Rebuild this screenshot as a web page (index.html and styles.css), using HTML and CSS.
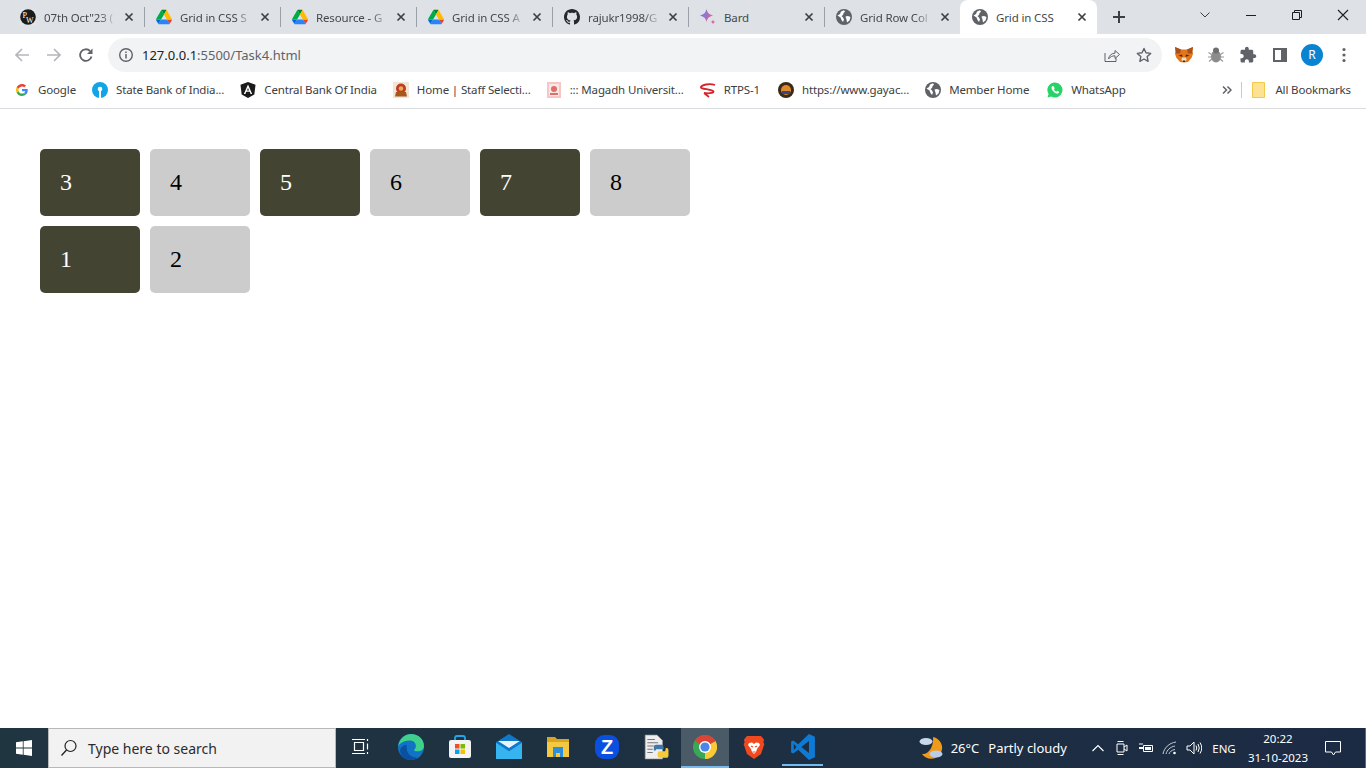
FILE: index.html
```html
<!DOCTYPE html>
<html lang="en">
<head>
    <meta charset="UTF-8">
    <title>Grid in CSS</title>
    <link rel="stylesheet" href="styles.css">
</head>
<body>

<svg class="sprite">
    <symbol id="drive" viewBox="0 0 87.3 78">
        <path d="m6.6 66.85 3.85 6.65c.8 1.4 1.95 2.5 3.3 3.3l13.75-23.8h-27.5c0 1.55.4 3.1 1.2 4.5z" fill="#0066da"/>
        <path d="m43.65 25-13.75-23.8c-1.35.8-2.5 1.9-3.3 3.3l-25.4 44a9.06 9.06 0 0 0 -1.2 4.5h27.5z" fill="#00ac47"/>
        <path d="m73.55 76.8c1.35-.8 2.5-1.9 3.3-3.3l1.6-2.75 7.65-13.25c.8-1.4 1.2-2.95 1.2-4.5h-27.502l5.852 11.5z" fill="#ea4335"/>
        <path d="m43.65 25 13.75-23.8c-1.35-.8-2.9-1.2-4.5-1.2h-18.5c-1.6 0-3.15.45-4.5 1.2z" fill="#00832d"/>
        <path d="m59.8 53h-32.3l-13.75 23.8c1.35.8 2.9 1.2 4.5 1.2h50.8c1.6 0 3.15-.45 4.5-1.2z" fill="#2684fc"/>
        <path d="m73.4 26.5-12.7-22c-.8-1.4-1.95-2.5-3.3-3.3l-13.75 23.8 16.15 28h27.45c0-1.55-.4-3.1-1.2-4.5z" fill="#ffba00"/>
    </symbol>
    <symbol id="globe" viewBox="0 0 16 16">
        <circle cx="8" cy="8" r="8" fill="#5f6368"/>
        <path d="M1.5 6.5 4 5l1-2.5L8 1.2l1 1.3-1.5 1.8-.5 1.7L5.5 7l1.5 1.5 1 2-1 2.5-1.5-2-1-2.5z" fill="#fff"/>
        <path d="M9.5 7.5 12 7l2.5 1-1 3.5-2.5 2-.5-3z" fill="#fff"/>
    </symbol>
    <symbol id="close" viewBox="0 0 16 16">
        <path d="M4.500 4.500l7 7M11.500 4.500l-7 7" stroke="#3c4043" stroke-width="1.700" fill="none"/>
    </symbol>
</svg>

<!-- Tab strip -->
<div class="tabstrip">
    <div class="tab">
        <svg class="favicon" viewBox="0 0 16 16"><rect width="16" height="16" fill="#e4e5e8"/><circle cx="8" cy="8" r="7.800" fill="#1b1b1b"/><text x="2.500" y="8.500" class="pw-mark">P</text><text x="6" y="14" class="pw-mark">W</text></svg>
        <span class="tab-title">07th Oct"23 (</span>
        <svg class="tab-close"><use href="#close"/></svg>
    </div>
    <div class="tab">
        <svg class="favicon"><use href="#drive"/></svg>
        <span class="tab-title">Grid in CSS S</span>
        <svg class="tab-close"><use href="#close"/></svg>
    </div>
    <div class="tab">
        <svg class="favicon"><use href="#drive"/></svg>
        <span class="tab-title">Resource - G</span>
        <svg class="tab-close"><use href="#close"/></svg>
    </div>
    <div class="tab">
        <svg class="favicon"><use href="#drive"/></svg>
        <span class="tab-title">Grid in CSS A</span>
        <svg class="tab-close"><use href="#close"/></svg>
    </div>
    <div class="tab">
        <svg class="favicon" viewBox="0 0 16 16"><path fill="#24292f" d="M8 0C3.58 0 0 3.58 0 8c0 3.54 2.29 6.53 5.47 7.59.4.07.55-.17.55-.38 0-.19-.01-.82-.01-1.49-2.01.37-2.53-.49-2.69-.94-.09-.23-.48-.94-.82-1.13-.28-.15-.68-.52-.01-.53.63-.01 1.08.58 1.23.82.72 1.21 1.87.87 2.33.66.07-.52.28-.87.51-1.07-1.78-.2-3.64-.89-3.64-3.95 0-.87.31-1.59.82-2.15-.08-.2-.36-1.02.08-2.12 0 0 .67-.21 2.2.82.64-.18 1.32-.27 2-.27.68 0 1.36.09 2 .27 1.53-1.04 2.2-.82 2.2-.82.44 1.1.16 1.92.08 2.12.51.56.82 1.27.82 2.15 0 3.07-1.87 3.75-3.65 3.95.29.25.54.73.54 1.48 0 1.07-.01 1.93-.01 2.2 0 .21.15.46.55.38A8.013 8.013 0 0016 8c0-4.42-3.58-8-8-8z"/></svg>
        <span class="tab-title">rajukr1998/G</span>
        <svg class="tab-close"><use href="#close"/></svg>
    </div>
    <div class="tab">
        <svg class="favicon" viewBox="0 0 16 16">
            <defs><linearGradient id="bardStar" x1="0" y1="0" x2="1" y2="0.300"><stop offset="0" stop-color="#4f86ec"/><stop offset=".55" stop-color="#9b72cb"/><stop offset="1" stop-color="#e8618c"/></linearGradient></defs>
            <path d="M6.500 0C7 3.500 9 5.500 13 6.500 9 7.500 7 9.500 6.500 13 6 9.500 4 7.500 0 6.500 4 5.500 6 3.500 6.500 0z" fill="url(#bardStar)"/>
            <path d="M13 10.500c.2 1.400 1 2.200 2.500 2.500-1.500.3-2.300 1.100-2.500 2.500-.2-1.400-1-2.200-2.500-2.500 1.500-.3 2.300-1.100 2.500-2.500z" fill="#d9609a"/>
        </svg>
        <span class="tab-title plain">Bard</span>
        <svg class="tab-close"><use href="#close"/></svg>
    </div>
    <div class="tab">
        <svg class="favicon"><use href="#globe"/></svg>
        <span class="tab-title">Grid Row Col</span>
        <svg class="tab-close"><use href="#close"/></svg>
    </div>
    <div class="tab active">
        <svg class="favicon"><use href="#globe"/></svg>
        <span class="tab-title plain">Grid in CSS</span>
        <svg class="tab-close"><use href="#close"/></svg>
    </div>
    <div class="newtab">
        <svg class="ico-16" viewBox="0 0 16 16"><path d="M8 2v12M2 8h12" stroke="#3c4043" stroke-width="2"/></svg>
    </div>
    <div class="window-controls">
        <div class="win-btn"><svg class="ico-16" viewBox="0 0 16 16"><path d="M3.500 5.500 8 10l4.500-4.500" stroke="#3c4043" fill="none"/></svg></div>
        <div class="win-btn"><svg class="ico-16" viewBox="0 0 16 16"><path d="M3 8.500h10" stroke="#1f1f1f"/></svg></div>
        <div class="win-btn"><svg class="ico-16" viewBox="0 0 16 16"><path d="M3.500 5.500h7v7h-7zM5.500 5.500v-2h7v7h-2" stroke="#1f1f1f" fill="none"/></svg></div>
        <div class="win-btn"><svg class="ico-16" viewBox="0 0 16 16"><path d="M3 3l10 10M13 3 3 13" stroke="#1f1f1f" stroke-width="1.100"/></svg></div>
    </div>
</div>

<!-- Address bar -->
<div class="toolbar">
    <div class="tool-btn first"><svg class="ico-16" viewBox="0 0 16 16"><path d="M15 8H2M8 2 2 8l6 6" stroke="#b4b6b9" stroke-width="1.700" fill="none"/></svg></div>
    <div class="tool-btn"><svg class="ico-16" viewBox="0 0 16 16"><path d="M1 8h13M8 2l6 6-6 6" stroke="#b4b6b9" stroke-width="1.700" fill="none"/></svg></div>
    <div class="tool-btn"><svg class="ico-16" viewBox="0 0 16 16"><path d="M13.500 9.500A5.800 5.800 0 1 1 12 4" stroke="#5f6368" stroke-width="1.800" fill="none"/><path d="M14.500 1.500v5.500H9z" fill="#5f6368"/></svg></div>
    <div class="omnibox">
        <svg class="ico-16" viewBox="0 0 16 16"><circle cx="8" cy="8" r="6.300" stroke="#5f6368" stroke-width="1.400" fill="none"/><path d="M8 7v4.500M8 4.500v1.500" stroke="#5f6368" stroke-width="1.500"/></svg>
        <span class="url"><span class="url-host">127.0.0.1</span>:5500/Task4.html</span>
        <span class="omni-actions">
            <svg class="ico-16" viewBox="0 0 16 16"><path d="M1 6v8.500h11V11" stroke="#5f6368" fill="none"/><path d="M4.500 12c.5-3.500 3-5.800 6.500-5.800V3.500l4.500 4-4.500 4V8.800c-2.800 0-4.800 1-6.500 3.200z" stroke="#5f6368" fill="none"/></svg>
            <svg class="ico-16" viewBox="0 0 16 16"><path d="M8 1.500l2 4.300 4.700.6-3.500 3.200.9 4.700L8 12l-4.100 2.300.9-4.700L1.300 6.400 6 5.800z" stroke="#5f6368" stroke-width="1.400" stroke-linejoin="round" fill="none"/></svg>
        </span>
    </div>
    <div class="tool-btn"><svg class="ico-18" viewBox="0 0 18 18"><path d="M0 1l6 2.500h6L18 1l-.8 4.500.8 2-1.200 4L13 16l-4 .5L5 16l-3.800-4.500L0 7.500l.8-2z" fill="#e2761b"/><path d="M0 1l6 2.500-1 4-4.200 0zM18 1l-6 2.500 1 4 4.200 0z" fill="#a8501c"/><path d="M3.500 9.500 7 8.500l.5 2.500zM14.500 9.500 11 8.500l-.5 2.500z" fill="#4a2d14"/><path d="M7 11.500h4l.5 2.500-2.500 2-2.500-2z" fill="#f6d9b8"/><path d="M8 14.500h2v1.500H8z" fill="#2a2a2a"/></svg></div>
    <div class="tool-btn"><svg class="ico-18" viewBox="0 0 18 18"><ellipse cx="9" cy="10.500" rx="5" ry="6" fill="#8c8c8c"/><circle cx="9" cy="4.500" r="3" fill="#6f6f6f"/><path d="M1.500 6.500l3 2M1 11h3M2 15.500l3-2.500M16.500 6.500l-3 2M17 11h-3M16 15.500l-3-2.500" stroke="#9a9a9a" stroke-width="1.200"/></svg></div>
    <div class="tool-btn"><svg class="ico-18" viewBox="0 0 24 24"><path fill="#5f6368" d="M20.500 11H19V7c0-1.100-.9-2-2-2h-4V3.500C13 2.120 11.880 1 10.500 1S8 2.120 8 3.500V5H4c-1.100 0-1.990.9-1.990 2v3.800H3.500c1.490 0 2.700 1.210 2.700 2.700s-1.210 2.700-2.700 2.700H2V20c0 1.100.9 2 2 2h3.800v-1.500c0-1.490 1.210-2.700 2.700-2.700 1.490 0 2.700 1.210 2.700 2.700V22H17c1.100 0 2-.9 2-2v-4h1.500c1.380 0 2.500-1.120 2.500-2.500S21.880 11 20.500 11z"/></svg></div>
    <div class="tool-btn"><div class="panel-ico"></div></div>
    <div class="tool-btn"><div class="avatar">R</div></div>
    <div class="tool-btn"><svg class="ico-16" viewBox="0 0 16 16"><circle cx="8" cy="2.500" r="1.600" fill="#5f6368"/><circle cx="8" cy="8" r="1.600" fill="#5f6368"/><circle cx="8" cy="13.500" r="1.600" fill="#5f6368"/></svg></div>
</div>

<!-- Bookmarks -->
<div class="bookmarks">
    <span class="bm"><svg class="bm-ico small" viewBox="0 0 48 48"><path fill="#EA4335" d="M24 9.500c3.540 0 6.710 1.220 9.210 3.600l6.850-6.850C35.900 2.380 30.470 0 24 0 14.620 0 6.510 5.380 2.560 13.220l7.980 6.190C12.430 13.720 17.740 9.500 24 9.500z"/><path fill="#4285F4" d="M46.980 24.550c0-1.570-.15-3.090-.38-4.550H24v9.020h12.940c-.58 2.960-2.260 5.480-4.780 7.180l7.730 6c4.510-4.180 7.090-10.360 7.090-17.650z"/><path fill="#FBBC05" d="M10.530 28.590c-.48-1.450-.76-2.990-.76-4.590s.27-3.140.76-4.590l-7.980-6.190C.92 16.460 0 20.120 0 24c0 3.880.92 7.540 2.560 10.780l7.970-6.190z"/><path fill="#34A853" d="M24 48c6.480 0 11.930-2.130 15.890-5.810l-7.730-6c-2.150 1.450-4.920 2.300-8.160 2.300-6.260 0-11.570-4.220-13.470-9.910l-7.980 6.190C6.510 42.620 14.620 48 24 48z"/></svg>Google</span>
    <span class="bm"><svg class="bm-ico" viewBox="0 0 16 16"><circle cx="8" cy="8" r="8" fill="#12a5e6"/><circle cx="8" cy="7" r="2.300" fill="#fff"/><path d="M7 8h2v8H7z" fill="#fff"/></svg>State Bank of India...</span>
    <span class="bm"><svg class="bm-ico" viewBox="0 0 16 16"><path d="M8 0l7.500 2.700-1.200 9.800L8 16l-6.300-3.500L.5 2.700z" fill="#1a1a1a"/><path d="M8 2.500 3.800 12h1.600l.9-2.200h3.400l.9 2.200h1.600zM7 8.400 8 6l1 2.400z" fill="#fff" fill-rule="evenodd"/></svg>Central Bank Of India</span>
    <span class="bm"><svg class="bm-ico" viewBox="0 0 16 16"><rect width="16" height="16" fill="#efe6d4"/><circle cx="8" cy="6.500" r="5" fill="#c0392b"/><path d="M3 10h10l1 4.500H2z" fill="#a8571f"/><circle cx="8" cy="6.500" r="2.300" fill="#e8b04a"/></svg>Home | Staff Selecti...</span>
    <span class="bm"><svg class="bm-ico narrow" viewBox="0 0 14 16"><rect width="14" height="16" fill="#f4c6c4"/><rect x="2" y="2" width="10" height="12" fill="#fbe6e4"/><circle cx="7" cy="7" r="3" fill="#d9706c"/><path d="M3 11h8v2H3z" fill="#d9706c"/></svg>::: Magadh Universit...</span>
    <span class="bm wide"><svg class="bm-ico" viewBox="0 0 16 16"><path d="M15 3C9 1 2 3 1 5c-1 2 9 2 12 4 2 1.500-3 3-9 2M4 11l5 4" stroke="#d8232a" stroke-width="1.800" fill="none"/></svg>RTPS-1</span>
    <span class="bm"><svg class="bm-ico" viewBox="0 0 16 16"><circle cx="8" cy="8" r="8" fill="#3a2a18"/><circle cx="8" cy="8" r="5" fill="#e08a2c"/><path d="M4 9h8v3H4z" fill="#2c4a8c"/></svg>https://www.gayac...</span>
    <span class="bm wide"><svg class="bm-ico"><use href="#globe"/></svg>Member Home</span>
    <span class="bm"><svg class="bm-ico" viewBox="0 0 16 16"><path d="M8 .5A7.500 7.500 0 0 0 1.600 12L.5 15.500l3.700-1A7.500 7.500 0 1 0 8 .5z" fill="#25d366"/><path d="M5.500 4c-.8.600-1.200 1.500-.8 2.800.6 2 2.500 4 4.500 4.700 1.300.4 2.300 0 2.900-.9l-.2-1-1.800-.8-.8.900c-1-.4-2-1.400-2.400-2.400l.8-.8-.7-1.900z" fill="#fff"/></svg>WhatsApp</span>
    <span class="bm-more">
        <svg class="ico-10" viewBox="0 0 10 10"><path d="M1 1.500 4.500 5 1 8.500M5.500 1.500 9 5 5.500 8.500" stroke="#5f6368" stroke-width="1.500" fill="none"/></svg>
    </span>
    <span class="bm-sep"></span>
    <span class="bm last"><svg class="bm-ico folder" viewBox="0 0 13 16"><path d="M.5.500h12v15H.5z" fill="#fde293" stroke="#f2c94c"/></svg>All Bookmarks</span>
</div>

<!-- Page -->
<div class="page">
    <div class="grid">
        <div class="box dark">3</div>
        <div class="box">4</div>
        <div class="box dark">5</div>
        <div class="box">6</div>
        <div class="box dark">7</div>
        <div class="box">8</div>
        <div class="box dark">1</div>
        <div class="box">2</div>
    </div>
</div>

<!-- Windows taskbar -->
<div class="taskbar">
    <div class="start">
        <svg class="ico-16" viewBox="0 0 16 16"><path fill="#fff" d="M0 2.300 6.800 1.300V7.600H0zM7.600 1.200 16 0v7.600H7.600zM0 8.400h6.800v6.300L0 13.700zM7.600 8.400H16V16l-8.400-1.200z"/></svg>
    </div>
    <div class="search">
        <svg class="ico-18" viewBox="0 0 18 18"><circle cx="10.500" cy="7" r="5.500" stroke="#222" stroke-width="1.200" fill="none"/><path d="M6.500 11 1.500 16.500" stroke="#222" stroke-width="1.300"/></svg>
        <span>Type here to search</span>
    </div>
    <div class="task-icons">
        <div class="task"><svg class="ico-18 nudge" viewBox="0 0 18 18"><path d="M3.500 4.500h9v8h-9zM1 1.500h13M1 15.500h13M16.500 1v2M16.500 5.500v6M16.500 14v2" stroke="#fff" stroke-width="1.200" fill="none"/></svg></div>
        <div class="task"><svg class="ico-26" viewBox="0 0 24 24"><circle cx="12" cy="12" r="12" fill="#1173c6"/><path d="M0 12C1 4 7 0 12 0c7 0 12 5 12 11 0 3-2.500 5-6 5-2 0-3.500-.5-3-1.500 1-1 1.500-2 1.500-3.500C16.500 8 14 6 11 6 5 6 1 9 0 12z" fill="#3fd08c"/><path d="M8 13c0 5 4 9 10 9-2 1.500-4 2-6 2-6 0-10-4-10-9 0-2 3-5 6-5-.5 1-.000 2 0 3z" fill="#0a4fa0"/></svg></div>
        <div class="task"><svg class="ico-24" viewBox="0 0 24 24"><path d="M7 6V3q0-2 2-2h6q2 0 2 2v3" stroke="#22a5e8" stroke-width="1.800" fill="none"/><rect x="1" y="5" width="22" height="18" rx="2" fill="#f3f3f3"/><rect x="7" y="9" width="4.500" height="4.500" fill="#f25022"/><rect x="12.500" y="9" width="4.500" height="4.500" fill="#7fba00"/><rect x="7" y="14.500" width="4.500" height="4.500" fill="#00a4ef"/><rect x="12.500" y="14.500" width="4.500" height="4.500" fill="#ffb900"/></svg></div>
        <div class="task"><svg class="ico-26" viewBox="0 0 24 24"><path d="M0 7.500 12 0l12 7.500V23H0z" fill="#0f78c8"/><path d="M0 8l12 8 12-8v15H0z" fill="#35b4f0"/><path d="M2 6.500h20L12 13z" fill="#e8f4fb"/></svg></div>
        <div class="task"><svg class="ico-24" viewBox="0 0 24 22"><path d="M1 1h8l2 2h12v18H1z" fill="#d9a420"/><path d="M1 6h22v15H1z" fill="#f5c842"/><path d="M7 11h10v10h-3v-4h-4v4H7z" fill="#2d8fd9"/></svg></div>
        <div class="task"><svg class="ico-24" viewBox="0 0 24 24"><rect width="24" height="24" rx="9" fill="#0b4fe0"/><text x="12" y="19" class="zoom-z">Z</text></svg></div>
        <div class="task"><svg class="ico-26" viewBox="0 0 24 24"><path d="M2 1h11l5 5v17H2z" fill="#eeeeee" stroke="#999" stroke-width=".6"/><path d="M4 5h7M4 8h10M4 11h6M4 14h5M4 17h5" stroke="#777"/><path d="M12 10h5q2 0 2 2v2h-7v1l-2 .5V12q0-2 2-2z" fill="#3d78ab"/><path d="M21 13h1q1.500 0 1.500 2v5q0 2-2 2h-6q-2 0-2-2v-2q0-2 2-2h5z" fill="#f5c93c"/></svg></div>
        <div class="task active"><svg class="ico-24" viewBox="0 0 24 24"><circle cx="12" cy="12" r="12" fill="#3aa757"/><path d="M12 12 22.400 6A12 12 0 0 1 12 24z" fill="#fcc934"/><path d="M12 12 1.600 6A12 12 0 0 1 22.400 6z" fill="#db4437"/><circle cx="12" cy="12" r="6" fill="#fff"/><circle cx="12" cy="12" r="4.600" fill="#4a86e8"/></svg></div>
        <div class="task"><svg class="ico-24" viewBox="0 0 24 24"><path d="M5 1h14l3 3.500-.6 3 1 1.500L19 19l-7 5-7-5L1.600 9l1-1.500L2 4.500z" fill="#f1491f"/><path d="M7 8l3-.5 2 1.500 2-1.500 3 .5 1 2-3 4-1 3-2 2-2-2-1-3-3-4z" fill="#fff"/><path d="M9 11l2 1M15 11l-2 1M10.500 17h3" stroke="#f1491f" stroke-width="1.200"/></svg></div>
        <div class="task marked"><svg class="ico-26" viewBox="0 0 24 24"><path fill="#0e7ad3" fill-rule="evenodd" d="M17.500 0 7.500 9.500 3 6 1 7v10l2 1 4.500-3.500L17.500 24l5.500-2.500v-19zM17.500 6.500v11L10.500 12zM3.500 9 6 12l-2.500 3z"/></svg></div>
    </div>
    <div class="tray">
        <svg class="weather-ico" viewBox="0 0 24 24"><path d="M14 1a11 11 0 1 1-11 17c7 1 12-8 11-17z" fill="#f09a1a"/><ellipse cx="7" cy="5.500" rx="6.500" ry="3.500" fill="#c9d7ea"/><ellipse cx="17" cy="18" rx="6.500" ry="3.500" fill="#b9cdea"/></svg>
        <span class="temp">26°C</span>
        <span class="cond">Partly cloudy</span>
        <div class="tray-ico first"><svg class="ico-14" viewBox="0 0 14 14"><path d="M1.500 10 7 4.500 12.500 10" stroke="#fff" stroke-width="1.200" fill="none"/></svg></div>
        <div class="tray-ico"><svg class="ico-16" viewBox="0 0 16 16"><path d="M3 4h7v8H3zM10 7l3-2v6l-3-2M3.500 1.500h6M3.500 14.500h6" stroke="#fff" fill="none"/></svg></div>
        <div class="tray-ico"><svg class="ico-16" viewBox="0 0 16 16"><path d="M5.500 5.500h9v6h-9z" stroke="#fff" fill="none"/><path d="M7 7h6v3H7zM1 7h4v2H1z" fill="#fff"/><path d="M2 5V3M4 5V3" stroke="#fff"/></svg></div>
        <div class="tray-ico"><svg class="ico-16" viewBox="0 0 16 16"><path d="M1 14C2 8 7 3 14 2M4 14c1-4 4-7 9-8M7 14c.5-2 2.500-4 6-4.500" stroke="#c8ccd2" fill="none"/><circle cx="12.500" cy="13" r="1.300" fill="#fff"/></svg></div>
        <div class="tray-ico"><svg class="ico-16" viewBox="0 0 16 16"><path d="M1 6h3l4-4v12l-4-4H1zM10 5.500q1.500 2.500 0 5M12 4q2.500 4 0 8M14 2.500q3.500 5.500 0 11" stroke="#fff" fill="none"/></svg></div>
        <span class="lang">ENG</span>
        <div class="clock"><span>20:22</span><span>31-10-2023</span></div>
        <div class="notify"><svg class="ico-18" viewBox="0 0 18 18"><path d="M1.500 2.500h15v10.500h-5l-2 3-2-3h-6z" stroke="#fff" fill="none"/></svg></div>
    </div>
</div>

</body>
</html>
```

FILE: styles.css
```css
* {
    box-sizing: border-box;
}
html, body {
    margin: 0;
    height: 100%;
}
body {
    display: flex;
    flex-direction: column;
    height: 768px;
    overflow: hidden;
    font-family: "Noto Sans", "Open Sans", sans-serif;
    background: #fff;
}
svg {
    display: block;
    flex: none;
}
.sprite {
    display: none;
}
.ico-10 { width: 10px; height: 10px; }
.ico-14 { width: 14px; height: 14px; }
.ico-16 { width: 16px; height: 16px; }
.ico-18 { width: 18px; height: 18px; }
.ico-24 { width: 24px; height: 24px; }
.ico-26 { width: 26px; height: 26px; }

/* tab strip */
.tabstrip {
    display: flex;
    height: 34px;
    padding-left: 8px;
    background: #dee1e6;
}
.tab {
    position: relative;
    display: flex;
    align-items: center;
    width: 136px;
    padding: 0 7px 0 12px;
    font-size: 11.5px;
    letter-spacing: -0.14px;
    color: #45494e;
}
.tab::before {
    content: "";
    position: absolute;
    left: 0;
    top: 7px;
    height: 20px;
    width: 1px;
    background: #9aa0a6;
}
.tab:first-child::before,
.tab.active::before {
    display: none;
}
.tab.active {
    width: 137px;
    background: #fff;
    border-radius: 8px 8px 0 0;
}
.favicon {
    width: 16px;
    height: 16px;
    margin-right: 8px;
}
.pw-mark {
    font-family: "Liberation Serif", serif;
    font-size: 8px;
    fill: #fff;
}
.tab-title {
    flex: 1;
    min-width: 0;
    overflow: hidden;
    white-space: nowrap;
    -webkit-mask-image: linear-gradient(to right, #000 72%, transparent 94%);
    mask-image: linear-gradient(to right, #000 72%, transparent 94%);
}
.tab-title.plain {
    -webkit-mask-image: none;
    mask-image: none;
}
.tab-close {
    width: 16px;
    height: 16px;
}
.newtab {
    display: flex;
    align-items: center;
    justify-content: center;
    width: 28px;
    margin-left: 8px;
}
.window-controls {
    display: flex;
    margin-left: auto;
}
.win-btn {
    display: flex;
    align-items: center;
    justify-content: center;
    width: 46px;
    height: 29px;
}

/* address bar */
.toolbar {
    display: flex;
    align-items: center;
    height: 38px;
    padding-top: 4px;
    background: #fff;
}
.tool-btn {
    display: flex;
    align-items: center;
    justify-content: center;
    width: 32px;
    height: 34px;
}
.tool-btn.first {
    margin-left: 6px;
}
.omnibox {
    display: flex;
    align-items: center;
    gap: 8px;
    width: 1054px;
    height: 34px;
    margin: 0 6px;
    padding: 0 10px;
    background: #f1f3f4;
    border-radius: 17px;
    font-size: 13px;
    color: #5f6368;
}
.url-host {
    color: #202124;
}
.omni-actions {
    display: flex;
    gap: 16px;
    margin-left: auto;
}
.panel-ico {
    width: 14px;
    height: 14px;
    border: 2px solid #5f6368;
    border-right-width: 6px;
}
.avatar {
    width: 22px;
    height: 22px;
    border-radius: 50%;
    background: #0a84d0;
    color: #fff;
    font-size: 12px;
    line-height: 22px;
    text-align: center;
}

/* bookmarks */
.bookmarks {
    display: flex;
    align-items: center;
    height: 37px;
    padding: 0 15px 1px 16px;
    background: #fff;
    border-bottom: 1px solid #dadce0;
    font-size: 11.5px;
    letter-spacing: -0.14px;
    color: #3c4043;
    white-space: nowrap;
}
.bm {
    display: flex;
    align-items: center;
    margin-right: 16px;
}
.bm.wide {
    margin-right: 18px;
}
.bm.last {
    margin-right: 0;
}
.bm-ico {
    width: 16px;
    height: 16px;
    margin-right: 8px;
}
.bm-ico.small {
    width: 12px;
    height: 12px;
    margin: 0 10px 0 0;
}
.bm-ico.narrow {
    width: 14px;
    margin-right: 9px;
}
.bm-ico.folder {
    width: 13px;
    margin-right: 10px;
}
.bm-more {
    margin-left: auto;
}
.bm-sep {
    width: 1px;
    height: 16px;
    margin: 0 10px 0 9px;
    background: #c8cacd;
}

/* the page itself */
.page {
    flex: 1;
    padding: 40px;
    font-family: "Liberation Serif", serif;
    font-size: 24px;
}
.grid {
    display: grid;
    grid-template-columns: repeat(6, 100px);
    gap: 10px;
}
.box {
    padding: 20px;
    background: #ccc;
    color: #000;
    border-radius: 5px;
}
.box.dark {
    background: #444433;
    color: #fff;
}

/* taskbar */
.taskbar {
    display: flex;
    height: 40px;
    background: linear-gradient(to right, #1f3540, #1d2f42 60%, #1c2b44);
    color: #fff;
    border-right: 1px solid #5c6876;
}
.start {
    display: flex;
    align-items: center;
    justify-content: center;
    width: 48px;
}
.search {
    display: flex;
    align-items: center;
    gap: 10px;
    width: 288px;
    padding-left: 11px;
    background: #f2f2f2;
    border: 1px solid #b8b8b8;
    color: #2b2b2b;
    font-size: 14px;
}
.task-icons {
    display: flex;
    margin-left: 1px;
}
.task {
    display: flex;
    align-items: center;
    justify-content: center;
    width: 49px;
    height: 40px;
    border-bottom: 2px solid transparent;
}
.nudge {
    margin-right: 3px;
}
.task.active {
    width: 48px;
    margin-left: 1px;
    background: #4a5a66;
    border-bottom-color: #76b9ed;
}
.task.marked {
    position: relative;
}
.task.marked::after {
    content: "";
    position: absolute;
    left: 4px;
    right: 4px;
    bottom: 0;
    height: 2px;
    background: #76b9ed;
}
.zoom-z {
    font-family: "Liberation Sans", sans-serif;
    font-size: 20px;
    font-weight: bold;
    fill: #fff;
    text-anchor: middle;
}
.tray {
    display: flex;
    align-items: center;
    margin-left: auto;
    font-size: 13px;
}
.weather-ico {
    width: 24px;
    height: 24px;
    margin-right: 8px;
}
.temp {
    margin-right: 9px;
}
.tray-ico {
    display: flex;
    justify-content: center;
    width: 24px;
}
.tray-ico.first {
    margin-left: 19px;
}
.lang {
    width: 34px;
    padding-left: 2px;
    font-size: 11.5px;
    text-align: center;
}
.clock {
    display: flex;
    flex-direction: column;
    align-items: center;
    width: 76px;
    font-size: 11.5px;
    line-height: 19px;
}
.notify {
    display: flex;
    justify-content: center;
    width: 33px;
    margin: 0 16px 0 0;
}
```
